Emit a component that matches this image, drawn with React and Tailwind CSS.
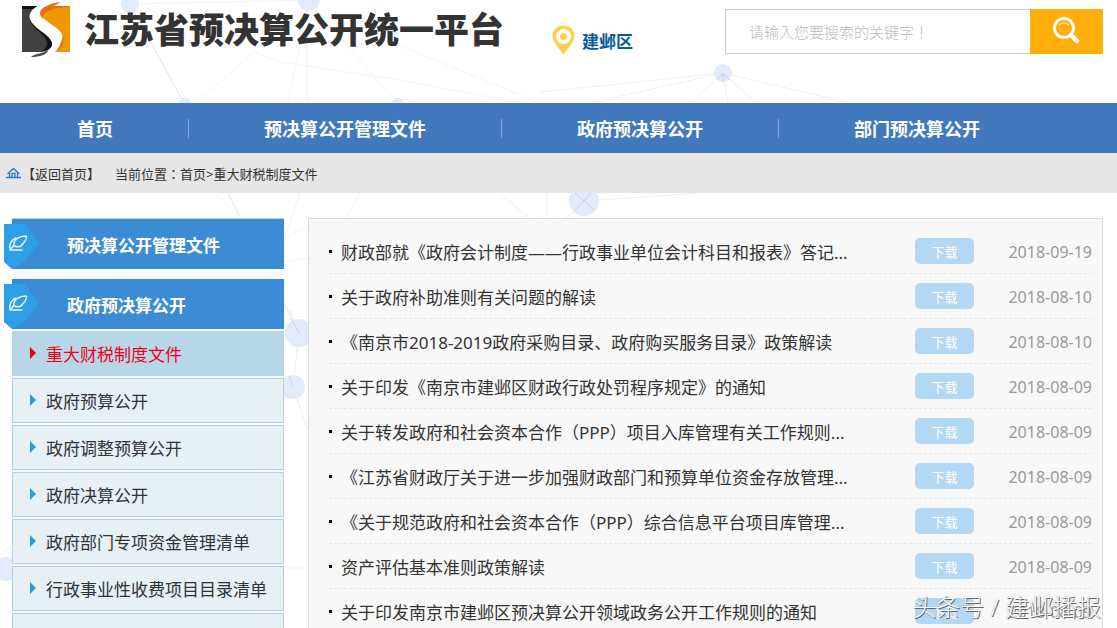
import React from "react";

const NAV = ["首页", "预决算公开管理文件", "政府预决算公开", "部门预决算公开"];

const SIDE = [
  "重大财税制度文件",
  "政府预算公开",
  "政府调整预算公开",
  "政府决算公开",
  "政府部门专项资金管理清单",
  "行政事业性收费项目目录清单",
  "",
];

const ROWS = [
  ["财政部就《政府会计制度——行政事业单位会计科目和报表》答记...", "2018-09-19"],
  ["关于政府补助准则有关问题的解读", "2018-08-10"],
  ["《南京市2018-2019政府采购目录、政府购买服务目录》政策解读", "2018-08-10"],
  ["关于印发《南京市建邺区财政行政处罚程序规定》的通知", "2018-08-09"],
  ["关于转发政府和社会资本合作（PPP）项目入库管理有关工作规则...", "2018-08-09"],
  ["《江苏省财政厅关于进一步加强财政部门和预算单位资金存放管理...", "2018-08-09"],
  ["《关于规范政府和社会资本合作（PPP）综合信息平台项目库管理...", "2018-08-09"],
  ["资产评估基本准则政策解读", "2018-08-09"],
  ["关于印发南京市建邺区预决算公开领域政务公开工作规则的通知", "2018-08-09"],
];

function Network() {
  const dots = [
    [130, 4, 9], [309, 0, 11], [185, 105, 7], [398, 105, 7], [723, 73, 9],
    [584, 201, 15], [299, 333, 14], [293, 387, 12], [6, 569, 12],
  ];
  return (
    <svg className="absolute left-0 top-0" width="1117" height="628" viewBox="0 0 1117 628" aria-hidden="true">
      <g fill="none" strokeWidth="1">
        <path stroke="#e2e4e8" d="M130 4L185 105M228 193L299 333" />
        <path stroke="#f3f4f6" d="M215 193L245 222M130 4L309 0M309 0L398 105M309 0L286 110M307 0V103M195 103L255 52L280 62M280 62L400 80L520 103M398 45L540 103" />
        <path stroke="#f1f1f3" d="M723 73L590 103M723 73L540 92M723 73L690 103M723 73L728 103M723 73L756 103M723 73L850 103" />
        <path stroke="#edeff3" d="M584 201L565 219M584 201L700 193M547 193V219M500 193L530 219M299 333L293 387L308 430M299 333L290 310M284 568H308M0 555L12 545M0 568H12" />
        <path stroke="#f4f4f6" d="M284 240L308 225M284 262L308 258M300 193L284 240M360 193L345 219" />
      </g>
      {dots.map(([x, y, r]) => (
        <circle key={`${x}-${y}`} cx={x} cy={y} r={r} fill="#e2ebfb" />
      ))}
      <path d="M584 201L574 192M584 201L594 210M584 201L593 191M584 201L575 210M299 333L291 318M293 387L289 376M723 73L717 80M723 73V82M723 73L730 80" stroke="#c6d1e4" fill="none" />
    </svg>
  );
}

function Logo() {
  return (
    <svg width="50" height="56" viewBox="0 0 50 56" aria-hidden="true">
      <path d="M0 4H15C9 8 6 13 8 18C10 26 30 33 30 42C30 46 25 49 18 50H0Z" fill="#424242" />
      <path d="M0 4H15L11 7H0ZM7 14C7 27 27 32 25 43C24 46 22 48 18 50C26 49 30 46 30 42C30 33 9 27 7 14Z" fill="#111" />
      <path d="M48 4V50H33C40 46 42 41 41 35C39 25 21 20 19 12C19 8 25 5 34 4Z" fill="#f29600" />
      <path d="M39 0C30 1 18 5 18 11C18 13 19 15 21 17C20 9 30 6 48 5V4H32Z" fill="#e2700c" />
      <path d="M33 50C40 47 43 41 41 33C39 41 38 45 33 50Z" fill="#e2700c" />
      <path d="M27 47C22 52 13 51 9 55C18 55 25 53 27 47Z" fill="#4a4a4a" />
    </svg>
  );
}

function Tag() {
  return (
    <svg className="absolute -left-2 top-[5px]" width="35" height="45" viewBox="0 0 35 45" aria-hidden="true">
      <path d="M0 0H21L35 19L21 37L8 45L0 38Z" fill="#2f9ee9" />
      <g fill="none" stroke="#e8f6ff" strokeWidth="1.4" strokeLinecap="round" strokeLinejoin="round">
        <path d="M7 25L10 21C9 16 15 12 22 12C24 15 20 18 18 21C16 24 13 23 10 22" />
        <path d="M12 14C7 16 5 20 6 26H18" />
      </g>
    </svg>
  );
}

export default function App() {
  return (
    <div
      lang="zh-CN"
      className="relative h-screen overflow-hidden bg-white font-['Noto_Sans','Noto_Sans_CJK_SC',sans-serif] text-[#333]"
    >
      <Network />
      <div className="relative">
        <header className="flex h-[103px] items-start pl-[22px] pr-[14px]">
          <div className="pt-[2px]"><Logo /></div>
          <h1 className="ml-3 whitespace-nowrap pt-[5px] text-[35px] font-black leading-[50px]">
            江苏省预决算公开统一平台
          </h1>
          <div className="ml-12 flex items-start gap-[7px] whitespace-nowrap pt-[25px]">
            <svg width="23" height="30" viewBox="0 0 23 30" aria-hidden="true">
              <path fillRule="evenodd" fill="#fdd04f" d="M11.500 0.500C18 .5 22.500 5 22.500 11C22.500 17 16 23 11.500 29.500C7 23 .5 17 .5 11C.5 5 5 .5 11.500 .5ZM11.500 4A7.500 7.500 0 1 0 11.500 19A7.500 7.500 0 1 0 11.500 4Z" />
              <circle cx="11.500" cy="11.500" r="3.500" fill="#fdd04f" />
            </svg>
            <span className="pt-[5px] text-[17px] font-bold leading-6 text-[#0a5c98]">建邺区</span>
          </div>
          <form className="ml-auto flex h-[54px] w-[378px] pt-[9px]" onSubmit={(e) => e.preventDefault()}>
            <input
              type="text"
              lang="zh-TW"
              aria-label="搜索"
              placeholder="请输入您要搜索的关键字！"
              className="min-w-0 flex-1 border border-r-0 border-[#ccc] bg-white pl-[23px] pt-[2px] font-['Noto_Sans_CJK_TC','Noto_Sans_CJK_SC',sans-serif] text-[15px] font-light outline-none placeholder:text-[#bbb]"
            />
            <button type="submit" aria-label="搜索" className="flex w-[73px] items-center justify-center bg-[#ffae0c] pb-1 pr-[2px]">
              <svg width="28" height="28" viewBox="0 0 28 28" fill="none" stroke="#fff" aria-hidden="true">
                <circle cx="12" cy="12" r="9.500" strokeWidth="3" />
                <path d="M19 19L25 25" strokeWidth="4.500" strokeLinecap="round" />
                <path d="M7 9C9 6.500 14 6 17 9" strokeWidth="1" />
              </svg>
            </button>
          </form>
        </header>

        <nav className="flex h-[50px] items-center bg-[#4178be] pl-[2px]">
          {NAV.map((t, i) => (
            <a
              key={t}
              href="#"
              className={`whitespace-nowrap px-[75px] pt-px text-lg font-bold leading-[18px] text-white ${i < 3 ? "border-r border-[#7fa8dc]" : ""}`}
            >
              {t}
            </a>
          ))}
        </nav>

        <div className="flex h-10 items-center bg-[#e6e6e6] pl-[6px] text-[13px] leading-5">
          <svg width="15" height="12" viewBox="0 0 15 12" fill="none" stroke="#2f79c4" strokeWidth="1.300" aria-hidden="true">
            <path d="M0 10.500H15M1.500 7L7.500 1.500L13.500 7M3.500 6V10M11.500 6V10M6 10V6.500H9V10" />
          </svg>
          <a href="#" className="ml-px pt-px">【返回首页】</a>
          <span className="ml-[15px] pt-px">
            当前位置<span className="font-['Noto_Sans_CJK_TC',sans-serif]" lang="zh-TW">：</span>
            <a href="#">首页</a>&gt;<a href="#">重大财税制度文件</a>
          </span>
        </div>

        <main className="flex items-start gap-6 pb-6 pl-3 pr-[14px] pt-[25px]">
          <aside className="w-[272px] shrink-0 border-t border-[#b9d3ea] bg-[#f7f9fa]">
            {["预决算公开管理文件", "政府预决算公开"].map((t, i) => (
              <h2
                key={t}
                className={`relative flex h-[50px] items-center bg-[#3c8bd5] pl-[55px] text-[17px] font-bold leading-6 text-white ${i ? "mt-[10px]" : ""}`}
              >
                <Tag />
                <a href="#" className="pt-[3px]">{t}</a>
              </h2>
            ))}
            <ul className="flex flex-col gap-[2px] pt-[2px]">
              {SIDE.map((t, i) => (
                <li
                  key={i}
                  className={`flex h-[45px] items-center gap-[10px] border pl-[17px] ${i === 0 ? "border-[#b7d7e8] bg-[#b7d7e8] text-[#f00014]" : "border-[#b5cfe2] bg-[#e6f0f5]"}`}
                >
                  {t && (
                    <>
                      <svg width="6" height="12" viewBox="0 0 6 12" className={`mb-[2px] ${i === 0 ? "text-[#e60012]" : "text-[#2b9bd6]"}`} aria-hidden="true">
                        <path d="M0 0L6 6L0 12Z" fill="currentColor" />
                      </svg>
                      <a href="#" className="whitespace-nowrap pt-[2px] text-[17px] leading-6">{t}</a>
                    </>
                  )}
                </li>
              ))}
            </ul>
          </aside>

          <section className="min-w-0 flex-1 border border-[#dadada] bg-[#f8f8f8] px-[10px] pb-6 pt-[10px]">
            <ul className="pl-[10px]">
              {ROWS.map(([t, d], i) => (
                <li key={i} className="flex h-[45px] items-center border-b border-dashed border-[#e6e6e6]">
                  <span className="h-[3px] w-[3px] shrink-0 bg-black" />
                  <a href="#" className="ml-[9px] min-w-0 flex-1 overflow-hidden whitespace-nowrap pt-1 text-[17px] leading-6">{t}</a>
                  <button type="button" className="h-[26px] w-[59px] shrink-0 rounded-[5px] bg-[#b3d8f3] pt-px text-[13px] leading-5 text-white">
                    下载
                  </button>
                  <time className="w-[118px] shrink-0 pt-[2px] text-right text-base leading-6 text-[#999]">{d}</time>
                </li>
              ))}
            </ul>
          </section>
        </main>
      </div>

      <div className="absolute bottom-[5px] right-4 whitespace-nowrap text-2xl font-light leading-8 text-white [text-shadow:1px_1px_0_#666,0_0_1px_#999]">
        头条号 / 建邺播报
      </div>
    </div>
  );
}
